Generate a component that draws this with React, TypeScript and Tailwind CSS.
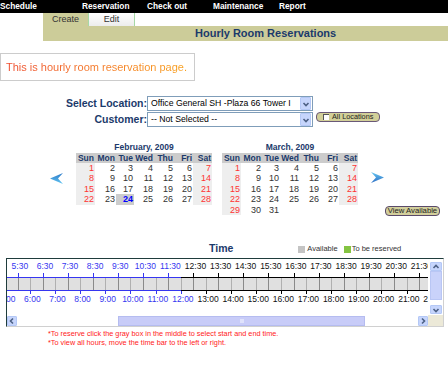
import clsx from "clsx";

const NAVY = "text-[#1b3a6b]";
const BLUE = "#3636f0";
const DAYS = ["Sun", "Mon", "Tue", "Wed", "Thu", "Fri", "Sat"];
const MENU = [
  { label: "Schedule", w: "w-[82px]" },
  { label: "Reservation", w: "w-[65px]" },
  { label: "Check out", w: "w-[66px]" },
  { label: "Maintenance", w: "w-[66px]" },
  { label: "Report", w: "w-[60px]" },
];

const topLabels = Array.from({ length: 17 }, (_, i) => `${i + 5}:30`);
const bottomLabels = Array.from({ length: 18 }, (_, i) => `${i + 5}:00`);

function MonthTable({ title, days, selected }: { title: string; days: number; selected?: number }) {
  const cells: (number | null)[] = [];
  for (let i = 0; i < Math.ceil(days / 7) * 7; i++) cells.push(i < days ? i + 1 : null);

  return (
    <div className="w-[136px]">
      <div className={clsx("h-[12px] text-center text-[8.5px] font-bold leading-[12px]", NAVY)}>{title}</div>
      <div className="grid grid-cols-[19px_21px_18px_20px_20px_19px_19px]">
        {DAYS.map((d) => (
          <div key={d} className={clsx("h-[10px] bg-[#cccccc] pr-[1px] text-right text-[8.5px] font-bold leading-[10px]", NAVY)}>
            {d}
          </div>
        ))}
        {cells.map((n, i) => {
          const weekend = i % 7 === 0 || i % 7 === 6;
          const cls =
            n === null
              ? ""
              : n === selected
                ? "bg-[#cccccc] font-bold text-[#0000ff]"
                : weekend
                  ? "bg-[#eeeeee] text-[#ff3333]"
                  : "text-[#333333]";
          return (
            <div key={i} className={clsx("h-[10.5px] pr-[1px] text-right text-[9px] leading-[10.5px]", cls)}>
              {n ?? ""}
            </div>
          );
        })}
      </div>
    </div>
  );
}

function NavArrow({ dir }: { dir: "left" | "right" }) {
  const id = `grad-${dir}`;
  return (
    <svg width="13" height="11" viewBox="0 0 13 11">
      <defs>
        <linearGradient id={id} x1="0" y1="0" x2="0" y2="1">
          <stop offset="0" stopColor={dir === "left" ? "#2c78c8" : "#68c8f2"} />
          <stop offset="1" stopColor={dir === "left" ? "#62c6f2" : "#2a6cc4"} />
        </linearGradient>
      </defs>
      <polygon points={dir === "left" ? "0,5.5 13,0 8,5.5 13,11" : "13,5.5 0,0 5,5.5 0,11"} fill={`url(#${id})`} />
    </svg>
  );
}

function Chevron({ dir }: { dir: "up" | "down" | "left" | "right" }) {
  const d = {
    up: "M1.5 5 L4 2.5 L6.5 5",
    down: "M1.5 3 L4 5.5 L6.5 3",
    left: "M5 1.5 L2.5 4 L5 6.5",
    right: "M3 1.5 L5.5 4 L3 6.5",
  }[dir];
  return (
    <svg width="8" height="8" viewBox="0 0 8 8">
      <path d={d} fill="none" stroke="#4d6185" strokeWidth="1.6" />
    </svg>
  );
}

function ScrollBtn({ dir, className }: { dir: "up" | "down" | "left" | "right"; className: string }) {
  return (
    <div className={clsx("flex items-center justify-center rounded-[1px] border border-[#b4c8f6] bg-[#c6d5fc]", className)}>
      <Chevron dir={dir} />
    </div>
  );
}

function Timeline() {
  return (
    <div className="h-[56px] w-[421px] overflow-hidden">
      <div className="-ml-[2px] w-[445px] pt-[2px]">
        <div className="flex h-[10px] items-center pl-[2.3px]">
          {topLabels.map((t, i) => (
            <div
              key={t}
              className={clsx("w-[25.1px] shrink-0 text-center text-[8.5px] leading-[10px]", i < 7 ? "text-[#3636f0]" : "text-[#111111]")}
            >
              {t}
            </div>
          ))}
        </div>
        <div className="mt-[2px] flex h-[4px] pl-[12.55px]">
          {topLabels.map((t, i) => (
            <div key={t} className={clsx("w-[25.1px] shrink-0 border-l", i < 7 ? "border-[#3636f0]" : "border-black")} />
          ))}
        </div>
        <div className="flex h-px">
          <div className="w-[175.7px]" style={{ background: BLUE }} />
          <div className="flex-1 bg-black" />
        </div>
        <div className="flex h-[12px] bg-[#e0e0e0]">
          {Array.from({ length: 36 }, (_, k) => (
            <div key={k} className={clsx("w-[12.55px] shrink-0 border-l", k % 2 ? "border-[#8a8a8a]" : "border-[#b0b0b0]")} />
          ))}
        </div>
        <div className="flex h-px">
          <div className="w-[175.7px]" style={{ background: BLUE }} />
          <div className="flex-1 bg-black" />
        </div>
        <div className="flex h-[3px]">
          {bottomLabels.map((t, i) => (
            <div key={t} className={clsx("w-[25.1px] shrink-0 border-l", i < 8 ? "border-[#3636f0]" : "border-black")} />
          ))}
        </div>
        <div className="flex h-[10px] items-center ml-[-10.25px]">
          {bottomLabels.map((t, i) => (
            <div
              key={t}
              className={clsx("w-[25.1px] shrink-0 text-center text-[8.5px] leading-[10px]", i < 8 ? "text-[#3636f0]" : "text-[#111111]")}
            >
              {t}
            </div>
          ))}
        </div>
      </div>
    </div>
  );
}

export default function App() {
  return (
    <div className="h-[365px] w-[448px] overflow-hidden bg-white font-['Liberation_Sans',Arial,sans-serif]">
      <nav className="flex h-[13px] items-center bg-black text-[8.3px] font-bold leading-[13px] text-white">
        {MENU.map((m) => (
          <span key={m.label} className={clsx("shrink-0", m.w)}>
            {m.label}
          </span>
        ))}
      </nav>

      <div className="flex h-[13px] pl-[43px] text-[9px] leading-[13px] text-[#333333]">
        <div className="w-[45px] bg-[#cccc99] text-center">Create</div>
        <div className="w-[47px] border-x border-[#a6d8a6] bg-linear-to-b from-white to-[#ececec] text-center">Edit</div>
      </div>
      <div className={clsx("ml-[43px] h-[15px] bg-[#cccc99] pl-[152px] text-[11px] font-bold leading-[15px]", NAVY)}>
        Hourly Room Reservations
      </div>

      <div className="mt-[12px] flex h-[28px] w-[195px] items-center border border-[#cccccc] pl-[5px]">
        <span className="bg-linear-to-r from-[#ee4a2c] to-[#f8a01c] bg-clip-text text-[11px] text-transparent">
          This is hourly room reservation page.
        </span>
      </div>

      <div className="mt-[15px] flex h-[15px] items-center">
        <label className={clsx("w-[147px] text-right text-[10.5px] font-bold", NAVY)}>Select Location:</label>
        <div className="flex h-[15px] w-[166px] items-center justify-between border border-[#7f9db9] pl-[3px] pr-px">
          <span className="text-[8.7px] text-black">Office General SH -Plaza 66 Tower I</span>
          <ScrollBtn dir="down" className="h-[13px] w-[11px]" />
        </div>
      </div>
      <div className="mt-px flex h-[15px] items-center">
        <label className={clsx("w-[147px] text-right text-[10.5px] font-bold", NAVY)}>Customer:</label>
        <div className="flex h-[15px] w-[166px] items-center justify-between border border-[#7f9db9] pl-[3px] pr-px">
          <span className="text-[8.7px] text-black">-- Not Selected --</span>
          <ScrollBtn dir="down" className="h-[13px] w-[11px]" />
        </div>
        <div className="ml-[3px] flex h-[10px] w-[64px] items-center self-start rounded-[4px] border border-[#6a5878] bg-[#d2cf98] pl-[6px]">
          <span className="h-[6px] w-[6px] border-t border-l border-[#555555] bg-white" />
          <span className="ml-[3px] text-[7.3px] leading-[8px] text-[#222222]">All Locations</span>
        </div>
      </div>

      <div className="mt-[13.5px] flex pl-[50px]">
        <div className="mt-[32px]">
          <NavArrow dir="left" />
        </div>
        <div className="ml-[13px]">
          <MonthTable title="February, 2009" days={28} selected={24} />
        </div>
        <div className="ml-[10px]">
          <MonthTable title="March, 2009" days={31} />
        </div>
        <div className="ml-[13px] flex flex-col">
          <div className="mt-[31px]">
            <NavArrow dir="right" />
          </div>
          <button className="ml-[14px] mt-[23px] flex h-[10px] w-[55px] items-center justify-center rounded-[4px] border border-[#5a4a6a] bg-[#d2cf9c] text-[7.7px] leading-[8px] text-[#222222]">
            View Available
          </button>
        </div>
      </div>

      <div className="mt-[26.5px] flex h-[14px] items-center">
        <span className={clsx("ml-[209px] text-[10.5px] font-bold", NAVY)}>Time</span>
        <span className="ml-[65px] h-[7px] w-[7px] bg-[#c4c4c4]" />
        <span className="ml-[2px] text-[7.5px] text-[#333333]">Available</span>
        <span className="ml-[6px] h-[7px] w-[7px] bg-[#84c442]" />
        <span className="ml-[1px] text-[7.5px] text-[#333333]">To be reserved</span>
      </div>

      <div className="ml-[6px] mt-[2px] h-[69px] w-[438px] border border-t-[#1f3c3c] border-l-[#1f3c3c] border-r-[#d0d0d0] border-b-[#d0d0d0]">
        <div className="flex">
          <Timeline />
          <div className="flex h-[56px] w-[15px] flex-col items-center pt-[3px]">
            <ScrollBtn dir="up" className="h-[9px] w-[12px]" />
            <div className="h-[29px] w-[12px] border border-[#b9c6f4] bg-[#c9d2fa]" />
            <div className="h-[5px]" />
            <ScrollBtn dir="down" className="h-[9px] w-[12px]" />
          </div>
        </div>
        <div className="flex h-[11px]">
          <div className="flex w-[421px] pt-px">
            <ScrollBtn dir="left" className="h-[10px] w-[10px]" />
            <div className="w-[101px]" />
            <div className="flex h-[10px] w-[247px] items-center justify-center border border-[#b5bcf0] bg-[#c8ccf8]">
              <span className="h-[4px] w-[4px] bg-[#dfe2fb]" />
            </div>
            <div className="flex-1" />
            <ScrollBtn dir="right" className="h-[10px] w-[10px]" />
          </div>
          <div className="w-[15px] bg-[#ece9d8]" />
        </div>
      </div>

      <div className="mt-[1.5px] pl-[48px] text-[7.3px] leading-[9px] text-[#ff1a1a]">
        <p>*To reserve click the gray box in the middle to select start and end time.</p>
        <p>*To view all hours, move the time bar to the left or right.</p>
      </div>
    </div>
  );
}
